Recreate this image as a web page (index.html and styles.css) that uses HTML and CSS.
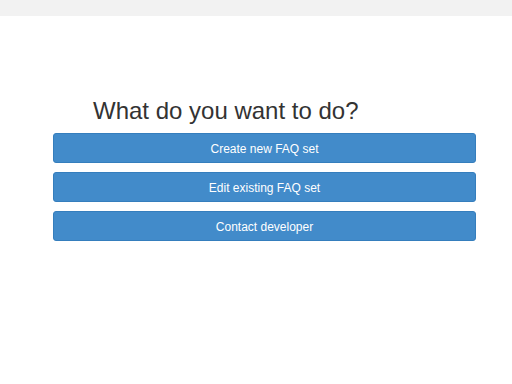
FILE: index.html
```html
<!DOCTYPE html>
<html lang="en">
<head>
    <meta charset="UTF-8">
    <meta name="viewport" content="width=device-width, initial-scale=1.0">
    <title>FAQ Builder</title>
    <link rel="stylesheet" href="styles.css">
</head>
<body>
    <div class="topbar"></div>
    <div class="container">
        <h2 class="title">What do you want to do?</h2>
        <div class="actions">
            <button type="button" class="btn">Create new FAQ set</button>
            <button type="button" class="btn">Edit existing FAQ set</button>
            <button type="button" class="btn">Contact developer</button>
        </div>
    </div>
</body>
</html>
```

FILE: styles.css
```css
body {
    font-family: "Liberation Sans", Arial, sans-serif;
    margin: 0;
    padding: 0;
    background-color: #fff;
    color: #333;
}
.topbar {
    background-color: #f2f2f2;
    height: 16px;
}
.container {
    width: 423px;
    margin: 0 0 0 53px;
    padding-top: 80px;
}
.title {
    font-size: 24px;
    font-weight: normal;
    line-height: 30px;
    margin: 0 0 7px 40px;
}
.actions {
    display: flex;
    flex-direction: column;
    gap: 9px;
}
.btn {
    display: block;
    width: 100%;
    height: 30px;
    background-color: #428bca;
    border: 1px solid #357ebd;
    border-radius: 3px;
    color: white;
    font-family: inherit;
    font-size: 12px;
    padding: 1px 10px 0;
    cursor: pointer;
}
```
